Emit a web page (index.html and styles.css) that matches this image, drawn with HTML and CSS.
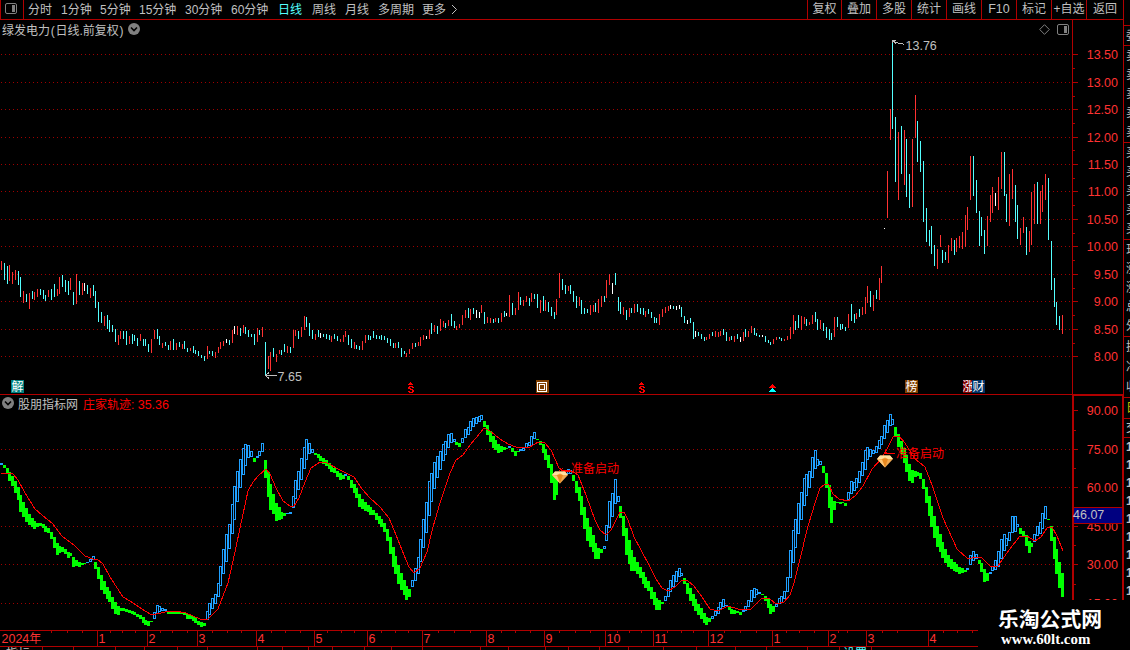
FILE: index.html
```html
<!DOCTYPE html>
<html lang="zh-CN">
<head>
    <meta charset="UTF-8">
    <meta name="viewport" content="width=device-width, initial-scale=1.0">
    <title>绿发电力 日线</title>
    <link rel="stylesheet" href="styles.css">
</head>
<body>

    <div class="screen">
        <div class="main">
            <div class="toolbar">
                <div class="layout-btn">
                    <svg width="12" height="11"><rect x="0.5" y="0.5" width="11" height="10" rx="1.5" fill="none" stroke="#808080"/><rect x="7" y="2" width="3" height="7" fill="#808080"/></svg>
                </div>
                <div class="periods">
                    <span>分时</span>
                    <span>1分钟</span>
                    <span>5分钟</span>
                    <span>15分钟</span>
                    <span>30分钟</span>
                    <span>60分钟</span>
                    <span class="active">日线</span>
                    <span>周线</span>
                    <span>月线</span>
                    <span>多周期</span>
                    <span>更多</span>
                    <svg width="7" height="11"><path d="M1 1L5.5 5.5L1 10" fill="none" stroke="#c0c0c0"/></svg>
                </div>
                <div class="tools">
                    <span>复权</span>
                    <span>叠加</span>
                    <span>多股</span>
                    <span>统计</span>
                    <span>画线</span>
                    <span class="latin">F10</span>
                    <span>标记</span>
                    <span>+自选</span>
                    <span>返回</span>
                </div>
            </div>

            <!-- K line pane -->
            <div class="pane">
                <svg id="price" class="chart" width="1124" height="375" viewBox="0 20 1124 375"></svg>
                <div class="pane-title">
                    <span>绿发电力<span class="paren">(</span>日线.前复权<span class="paren">)</span></span>
                    <svg width="12" height="12"><circle cx="6" cy="6" r="6" fill="#808080"/><path d="M3 4.5L6 7.5L9 4.5" fill="none" stroke="#000" stroke-width="1.6"/></svg>
                </div>
                <div class="pane-icons">
                    <svg width="11" height="11"><path d="M5.5 0.7L10.3 5.5L5.5 10.3L0.7 5.5Z" fill="none" stroke="#808080"/></svg>
                    <svg width="12" height="11"><rect x="0.5" y="0.5" width="11" height="10" rx="1.5" fill="none" stroke="#808080"/><rect x="7" y="2" width="3" height="7" fill="#808080"/></svg>
                </div>
            </div>

            <!-- Indicator pane -->
            <div class="pane">
                <svg id="track" class="chart" width="1124" height="235" viewBox="0 395 1124 235"></svg>
                <div class="pane-title second">
                    <svg width="12" height="12"><circle cx="6" cy="6" r="6" fill="#808080"/><path d="M3 4.5L6 7.5L9 4.5" fill="none" stroke="#000" stroke-width="1.6"/></svg>
                    <span>股朋指标网</span>
                    <span class="value">庄家轨迹: <b>35.36</b></span>
                </div>
            </div>

            <svg id="timeline" class="chart" width="1124" height="20" viewBox="0 630 1124 20"></svg>
        </div>

        <div class="side">
            <div class="group g1"></div>
            <div class="group g2"><span>委</span></div>
            <div class="group g5"><span>卖</span><span>卖</span><span>卖</span><span>卖</span><span>卖</span></div>
            <div class="group g5"><span>买</span><span>买</span><span>买</span><span>买</span><span>买</span></div>
            <div class="group g5"><span>现</span><span>涨</span><span>涨</span><span>总</span><span>外</span></div>
            <div class="group g3"><span>换</span><span>净</span><span>收</span></div>
            <div class="group g4 yellow"><span>日</span></div>
            <div class="group g6"><span>交</span></div>
            <div class="group ticks"><span>1</span><span>1</span><span>1</span><span>1</span><span>1</span><span>1</span><span>1</span><span>1</span><span>1</span></div>
        </div>

        <div class="brand">
            <div class="brand-name">乐淘公式网</div>
            <div class="brand-url">www.60lt.com</div>
        </div>
    </div>

    <script src="chart.js"></script>
</body>
</html>
```
FILE: styles.css
```css
body {
    margin: 0;
    background-color: #000000;
    font-family: "Liberation Sans", "Noto Sans CJK SC", sans-serif;
    font-size: 12px;
    color: #c0c0c0;
}
.screen {
    position: relative;
    display: flex;
    width: 1130px;
    height: 650px;
    overflow: hidden;
    background-color: #000000;
}
.main {
    width: 1124px;
    flex: none;
    display: flex;
    flex-direction: column;
}
.toolbar {
    display: flex;
    height: 19px;
    border-bottom: 1px solid #b00000;
    line-height: 18px;
    white-space: nowrap;
}
.layout-btn {
    box-sizing: border-box;
    width: 24px;
    padding: 3px 0 0 4px;
    border-left: 1px solid #b00000;
    border-right: 1px solid #b00000;
    line-height: 0;
}
.periods {
    display: grid;
    grid-template-columns: 33px 39px 39px 46px 46px 47px 34px 33px 33px 44px 29px 10px;
    padding-left: 4px;
    align-items: center;
}
.periods .active {
    color: #54ffff;
}
.tools {
    display: grid;
    grid-template-columns: 34px repeat(8, 35px) 3px;
    margin-left: auto;
    text-align: center;
}
.tools span {
    border-left: 1px solid #b00000;
}
.tools span:last-child {
    border-right: 1px solid #b00000;
    margin-right: -3px;
}
.tools .latin {
    font-size: 12.5px;
}
.pane {
    position: relative;
}
.chart {
    display: block;
}
.chart text {
    font-size: 12.5px;
}
.chart .cjk {
    font-size: 12px;
}
/* Titles are laid over the charts */
.pane-title {
    position: absolute;
    left: 2px;
    top: 0;
    display: flex;
    align-items: center;
    gap: 4px;
    height: 18px;
    white-space: nowrap;
}
.pane-title.second {
    gap: 4px;
    height: 16px;
}
.pane-title .paren {
    display: inline-block;
    width: 5.5px;
    text-align: center;
}
.pane-title .value {
    margin-left: 1px;
    color: #ff0000;
}
.pane-title .value b {
    font-size: 12.5px;
    font-weight: normal;
}
.pane-icons {
    position: absolute;
    right: 55px;
    top: 4px;
    display: flex;
    gap: 7px;
}
.side {
    flex: 1;
    overflow: hidden;
    margin-left: -1px;
    border-left: 1px solid #b00000;
}
.group {
    box-sizing: border-box;
    display: flex;
    flex-direction: column;
    justify-content: space-around;
    padding-left: 2px;
    line-height: 14px;
    border-bottom: 1px solid #b00000;
    overflow: hidden;
}
.g1 { height: 26px; }
.g2 { height: 20px; }
.g3 { height: 61px; }
.g4 { height: 21px; }
.g5 { height: 97px; }
.g6 { height: 19px; }
.ticks {
    height: 162px;
    border-bottom: none;
    font-weight: bold;
}
.yellow {
    color: #c0c000;
}
.brand {
    position: absolute;
    right: 0;
    bottom: 0;
    width: 132px;
    height: 50px;
    padding-left: 20px;
    background-color: #000000;
    color: #ffffff;
}
.brand-name {
    margin-top: 4px;
    font-family: "Noto Sans CJK SC", sans-serif;
    font-size: 20.8px;
    font-weight: bold;
    line-height: 28px;
}
.brand-url {
    padding-left: 3px;
    font-family: "Liberation Serif", serif;
    font-size: 14.9px;
    font-weight: bold;
    line-height: 15px;
}
```
FILE: chart.js
```js
const RED = '#b00000';
const UP = '#ff3232';

// x, colour (r up, c down, w flat), top-bottom
const candles = `
1r261-270 4c263-280 7c266-284 9r265-281 12r272-284 15r270-280 18c271-285 20c277-297 23r291-303 26c294-302
29r293-309 32c291-299 34r292-300 37r289-297 40c289-295 43c290-299 45c295-301 48r290-297 51c289-300 54c284-297
57r289-296 59r277-294 62c275-287 65c280-292 68c281-295 70r278-290 73c292-305 76r274-304 79c281-295 82r283-295
84w283-291 87c285-294 90r288-298 93c285-296 95c291-308 98c302-322 101c312-323 104r316-326 107c315-329 109c320-332
112c325-332 115c329-342 118r335-345 120r331-339 123c331-339 126c331-345 129r336-344 132c334-344 134c335-341 137c338-346
140r334-341 143c339-346 145c339-346 148c344-352 151r339-353 154r330-339 157c329-339 159c336-345 162r343-348 165c342-346
168c345-350 170r341-350 173c339-350 176r343-350 179c342-347 182r344-349 184c341-349 187c348-352 190r348-351 193c346-353
195c350-354 198c351-356 201c355-358 204c356-361 207r346-359 209c351-354 212c351-356 215r352-358 218r347-353 220r342-349
223r341-346 226w339-343 229c340-345 232r330-343 234w326-334 237r326-335 240c328-336 243r325-333 245c327-334 248c330-337
251c334-337 254c334-345 257r328-342 259c330-335 262r327-337 265c342-375 268r356-369 270r352-371 273c348-357 276r354-362
279r350-354 281c350-355 284c344-352 287r346-353 290c347-353 293r330-348 295r330-336 298c331-339 301r327-337 304r316-330
306c317-327 309c323-336 312c330-339 315r334-340 318c330-337 320w333-338 323c334-337 326c334-339 329c335-340 331r336-342
334c334-339 337c336-341 340r339-342 343r335-342 345r331-337 348c335-345 351c339-348 354r342-349 356c345-349 359c346-350
362r341-350 365r335-343 368c335-340 370c336-340 373c331-338 376c335-339 379c336-339 381c335-340 384c336-340 387c338-343
390c339-346 393c343-348 395r343-348 398c342-348 401c348-357 404c351-354 406r353-357 409r349-354 412r343-349 415c343-347
418r342-346 420r337-346 423r335-340 426w336-339 429r330-339 431c323-334 434r325-332 437c326-334 440r319-331 443r321-327
445c323-328 448r320-326 451c314-326 454c321-328 456r326-330 459r324-328 462r315-325 465r310-318 468c308-318 470r309-320
473c308-314 476w310-318 479w312-318 481r305-313 484c312-324 487r317-323 490r318-323 493c319-323 495r318-322 498c318-323
501r313-322 504c311-317 506w313-316 509r295-317 512c303-315 515r308-315 518r292-310 520c297-305 523r300-306 526r296-302
529c298-306 531r293-302 534c294-299 537c294-308 540r300-313 543c296-311 545r300-311 548c302-312 551c307-316 554c312-319
556r299-315 559r273-298 562c279-290 565c285-294 568r286-291 570c285-294 573c291-302 576c296-308 579r297-306 581c300-314
584c308-314 587c309-313 590r305-315 593r305-312 595c303-312 598r299-313 601r296-307 604c296-302 606r280-298 609r274-285
612w283-294 615c273-285 618c297-311 620c302-314 623r307-315 626c310-320 629r308-317 631c308-313 634r304-313 637c304-312
640c308-314 643c308-315 645r311-317 648c309-314 651c312-318 654c317-323 656c318-323 659r314-325 662r309-317 665r307-313
668r306-311 670w305-309 673c306-309 676w306-310 679w305-309 681c307-317 684c316-323 687w320-324 690c318-323 693c322-339
695w331-337 698c332-336 701c334-339 704c337-341 706r337-340 709r334-339 712c332-336 715r331-337 718r332-337 720r331-336
723c329-335 726c332-341 729r337-341 731c336-340 734r336-342 737c334-339 740w337-342 743r332-341 745c329-337 748r331-337
751r326-333 754c328-335 756c333-336 759c335-337 762w335-337 765c336-342 768c340-343 770c342-345 773r339-344 776r337-340
779c337-339 781c338-341 784r339-341 787r336-340 790r327-339 793r315-334 795c321-330 798c315-328 801r316-330 804r317-324
806c319-326 809r322-325 812r315-324 815c312-322 817c319-330 820r320-329 823c323-331 826c327-338 829c329-340 831c333-340
834r317-337 837c317-327 840c324-330 842c324-329 845c327-331 848r314-328 851c304-321 854c314-323 856r313-319 859c309-317
862r307-315 865r297-314 867r286-303 870c291-307 873r295-311 876c290-299 879r278-300 881r266-283 884w228-229 887r171-218
890r109-140 892c43-129 895c117-182 898r132-200 901c126-174 904r130-185 906c139-197 909c174-208 912r139-207 915r95-138
917c121-162 920c141-172 923c161-222 926c208-242 929c230-246 931c226-254 934c245-266 937r249-269 940r235-247 942c250-263
945c252-260 948r245-263 951r238-251 954c240-255 956r238-252 959r236-248 962r232-249 965r215-247 967r207-230 970r156-200
973c156-196 976c180-213 979c211-246 981c217-236 984c230-254 987r216-246 990r195-222 992r187-213 995w193-206 998r177-210
1001r152-189 1004c152-196 1006c194-222 1009r174-226 1012r169-199 1015c185-222 1017c205-239 1020r228-245 1023r217-233 1026c227-255
1029r231-252 1031r192-245 1034r184-224 1037c182-224 1040r191-224 1042r185-212 1045r174-200 1048c178-240 1051c241-290 1054c278-307
1056c302-325 1059c316-330 1062r315-334`;

// x, colour (b rising, g falling), top-bottom
const bars = `
1b463-465 4g465-468 7g468-474 9g472-481 12g476-486 15g481-493 18g487-500 20g495-512 23g502-517 26g508-522
29g514-525 32g518-527 34g521-529 37g523-527 40g523-526 43g524-528 45g526-532 48g528-533 51g532-539 54g537-548
57g543-555 59g546-553 62g547-552 65g549-554 68g552-558 70g553-556 73g557-567 76g560-566 79g562-567 82g563-565
84g563-564 87b562-563 90b559-562 93b556-560 95g562-569 98g567-579 101g575-590 104g581-594 107g587-599 109g591-602
112g597-609 115g602-614 118g606-615 120g608-611 123g608-611 126g609-612 129g610-613 132g611-614 134g612-615 137g614-617
140g615-619 143g617-623 145g620-625 148g621-626 151g621-622 154b612-619 157b605-614 159b606-612 162b608-611 165b609-611
168g611-614 170g611-614 173g612-614 176g612-614 179g612-614 182g612-614 184g612-615 187g614-619 190g615-619 193g616-621
195g618-623 198g621-625 201g622-627 204g623-626 207b611-620 209b603-615 212b598-609 215b594-604 218b583-597 220b566-586
223b549-574 226b534-562 229b524-549 232b504-534 234b486-520 237b471-502 240b459-488 243b448-475 245b444-466 248b445-458
251b451-457 254g458-462 257b456-458 259b451-456 262b443-452 265g460-478 268g472-497 270g484-510 273g494-514 276g503-521
279g507-520 281g512-519 284g513-516 287b513-514 290b512-514 293b496-508 295b480-499 298b471-490 301b458-480 304b447-469
306b439-460 309b443-454 312b449-453 315g453-455 318g454-458 320g456-461 323g458-464 326g460-466 329g463-469 331g466-472
334g468-473 337g471-477 340g473-480 343g475-479 345b474-476 348g476-480 351g480-488 354g484-493 356g488-498 359g494-507
362g499-509 365g502-511 368g505-512 370g507-515 373g510-515 376g513-520 379g516-524 381g519-527 384g523-532 387g529-541
390g537-554 393g547-567 395g556-574 398g565-584 401g573-590 404g580-595 406g586-600 409g589-597 412b580-587 415b568-581
418b557-574 420b539-562 423b519-548 426b502-533 429b481-516 431b473-502 434b462-489 437b456-478 440b451-470 443b444-461
445b441-455 448b434-448 451b433-443 454b439-442 456g442-445 459g443-447 462b438-443 465b429-438 468b427-435 470b421-431
473b418-427 476b417-424 479b416-422 481b415-420 484g421-427 487g425-435 490g431-442 493g436-448 495g440-450 498g444-453
501g446-452 504g447-450 506g448-449 509b446-448 512g448-452 515g451-456 518g451-452 520b449-451 523b448-451 526b443-448
529b442-446 531b436-446 534b432-439 537g439-440 540g441-445 543g444-453 545g449-460 548g455-468 551g464-483 554g474-500
556g480-495 568b469-474 570b470-474 573g475-481 576g481-493 579g487-501 581g496-515 584g507-529 587g518-541 590g527-547
593g535-552 595g543-559 598g548-559 601g549-553 604b546-549 606b525-541 609b501-528 612b493-517 615b479-504 618b496-502
620g506-518 623g516-536 626g528-555 629g540-564 631g550-571 634g557-571 637g562-574 640g567-578 643g572-584 645g577-588
648g581-591 651g587-599 654g592-605 656g598-610 659g600-610 662g602-604 665b596-601 668b588-597 670b580-592 673b575-587
676b571-582 679b568-577 681b573-576 684g578-584 687g583-594 690g588-601 693g594-606 695g599-611 698g604-615 701g608-619
704g613-623 706g617-625 709g618-622 712b616-619 715b611-616 718b607-614 720b602-609 723b599-607 726b605-606 729g607-610
731g609-614 734g610-614 737g611-613 740g612-615 743b610-612 745b606-611 748b600-607 751b590-602 754b588-598 756b589-595
759b592-594 762g594-595 765g596-601 768g599-608 770g604-614 773g606-612 776b604-607 779b598-604 781b596-603 784b591-599
787b577-592 790b550-578 793b530-563 795b519-548 798b503-534 801b492-520 804b478-506 806b474-496 809b471-488 812b457-478
815b450-469 817b459-466 820b461-465 823g466-473 826g473-488 829g485-508 831g497-523 834g501-510 837g502-503 840g502-504
842g502-503 845g503-506 848b492-500 851b481-494 854b482-491 856b478-488 859b471-483 862b462-476 865b450-470 867b447-460
870b449-457 873b450-454 876b446-453 879b440-449 881b436-445 884b425-439 887b420-433 890b414-426 892b419-425 895g427-436
898g434-447 901g441-454 904g448-463 906g455-472 909g464-481 912g470-483 915g471-477 917g472-476 920g473-479 923g479-489
926g487-503 929g496-516 931g506-527 934g516-538 937g526-547 940g534-552 942g542-558 945g549-563 948g555-567 951g559-569
954g562-571 956g564-572 959g567-574 962g568-573 965g570-572 967b568-570 970b555-565 973b551-561 976b554-559 979g560-564
981g563-572 984g569-582 987g573-581 990b572-574 992b566-571 995b560-570 998b551-567 1001b539-559 1004b534-551 1006b538-546
1009b532-541 1012b516-533 1015b516-532 1017b524-527 1020g528-534 1023g531-536 1026g535-546 1029g541-553 1031g543-547 1034b534-542
1037b526-536 1040b522-534 1042b513-529 1045b506-519 1048g519-520 1051g526-541 1054g537-559 1056g549-574 1059g562-588 1062g573-597`;

const average = `1,474 5,473 13,474 18,480 25,493 35,509 42,515 53,524 62,536 75,546 85,556 93,559 97,559 103,564 110,577
123,597 130,601 145,611 152,615 165,612 175,611 186,613 200,619 207,620 218,609 228,583 235,552 240,528 248,491 253,482
258,476 266,469 270,474 276,488 283,501 290,506 294,506 299,498 305,482 311,468 320,462 327,463 340,470 354,477 362,489
370,498 380,507 389,518 396,535 404,555 409,567 414,573 420,568 427,552 433,527 440,503 450,473 456,460 463,455 470,445
476,438 484,428 490,431 500,439 508,444 516,447 530,447 538,442 544,442 551,450 559,468 563,471 572,471 578,475 586,495
595,520 600,530 606,535 611,530 620,512 624,512 628,520 634,537 641,550 650,567 656,579 662,588 668,591 675,587 682,580
688,581 694,586 702,597 710,609 718,611 728,606 738,609 750,610 762,598 770,599 776,604 784,602 790,595 794,583 800,559
808,526 816,500 820,488 825,484 829,485 833,494 839,499 848,501 855,496 863,486 872,469 882,458 888,447 893,437 899,436
905,443 914,458 925,467 932,485 943,518 957,549 968,559 976,557 982,558 990,566 998,566 1009,550 1020,536 1027,536 1035,541
1041,537 1047,528 1052,527 1057,536 1063,551`;

function rect(x, y, w, h, fill) {
    return `<rect x="${x}" y="${y}" width="${w}" height="${h}" fill="${fill}"/>`;
}

function label(x, y, text, fill, extra = '') {
    return `<text x="${x}" y="${y}" fill="${fill}" ${extra}>${text}</text>`;
}

function dots(y) {
    return `<line x1="1" x2="1072" y1="${y + 0.5}" y2="${y + 0.5}" stroke="#a00000" stroke-dasharray="1 3"/>`;
}

function parse(data) {
    return [...data.matchAll(/(\d+)([a-z])(\d+)-(\d+)/g)].map(m => [+m[1], m[2], +m[3], +m[4]]);
}

// Small boxed event mark at the foot of the K line pane
function badge(x, w, text, fill) {
    return rect(x, 380, w, 13, fill) + label(x + w / 2, 391, text, '#ffffff', 'class="cjk" text-anchor="middle"');
}

// Arrow head over an S shape
function dollar(x) {
    return rect(x + 2, 382, 1, 1, '#ff0000') + rect(x + 1, 383, 3, 1, '#ff0000') + rect(x, 384, 5, 1, '#ff0000') +
        rect(x + 1, 386, 4, 1, '#ff0000') + rect(x, 387, 2, 1, '#ff0000') + rect(x + 4, 387, 2, 1, '#ff0000') +
        rect(x, 388, 3, 1, '#ff0000') + rect(x + 2, 389, 3, 1, '#ff0000') + rect(x + 4, 390, 2, 1, '#ff0000') +
        rect(x, 391, 2, 1, '#ff0000') + rect(x + 4, 391, 2, 1, '#ff0000') + rect(x + 1, 392, 4, 1, '#ff0000');
}

function gem(x, y) {
    return `<g transform="translate(${x} ${y})" shape-rendering="auto">
        <path d="M3 0.5H13L16 4L8 12.5L0 4Z" fill="#f0a850"/>
        <path d="M3 0.5H13L16 4H0Z" fill="#ffe0a0"/>
        <path d="M5 4H11L8 12.5Z" fill="#e88820"/>
        <path d="M5 4L8 2.5L11 4Z" fill="#f09838"/>
        <path d="M0 4L5 5L8 12.5Z" fill="#ffc878"/>
    </g>`;
}

function drawPrice() {
    const grid = [54, 82, 109, 137, 164, 191, 219, 246, 274, 301, 329, 356];
    const minor = [68, 96, 123, 150, 178, 205, 233, 260, 288, 315, 343];
    const colors = { r: UP, c: '#54ffff', w: '#ffffff' };
    let out = '';
    grid.forEach((y, i) => {
        out += dots(y) + rect(1073, y, 5, 1, RED);
        out += label(1118, y + 5, (13.5 - i * 0.5).toFixed(2), UP, 'text-anchor="end"');
    });
    minor.forEach(y => out += rect(1073, y, 2, 1, RED));
    parse(candles).forEach(([x, c, top, bottom]) => out += rect(x, top, 1, bottom - top, colors[c]));
    out += rect(1072, 20, 1, 375, RED) + rect(1123, 20, 1, 375, RED) + rect(0, 394, 1124, 1, RED);

    // highest and lowest price marks
    out += '<path d="M892.5 43V40.5H896M893 41L896 43.5M894 41.5L898 43H901L904 44.5" fill="none" stroke="#c0c0c0"/>';
    out += label(905.5, 50, '13.76', '#c0c0c0');
    out += '<path d="M265 375.5H277M269 372.5L265.5 375.5L269 378.5" fill="none" stroke="#c0c0c0"/>';
    out += label(277.5, 381, '7.65', '#c0c0c0');

    out += badge(11, 13, '解', '#008080');
    out += rect(536, 380, 13, 13, '#804000');
    out += '<rect x="537.5" y="382.5" width="9" height="9" fill="none" stroke="#fff"/><rect x="539.5" y="384.5" width="5" height="5" fill="none" stroke="#fff"/>';
    out += badge(905, 13, '榜', '#804000') + badge(963, 11, '涨', '#800000') + badge(972, 13, '财', '#003366');
    out += dollar(408) + dollar(639);
    out += '<path d="M772.5 384L776 388H769Z" fill="#ff0000"/><path d="M772.5 388L776 392H769Z" fill="#00ffff"/>';
    document.getElementById('price').innerHTML = out;
}

function drawTrack() {
    let out = '';
    [449, 487, 526, 564, 603].forEach(y => out += dots(y));
    [410, 449, 487, 526, 564, 603].forEach((y, i) => {
        out += rect(1074, y, 4, 1, RED) + label(1118, y + 5, (90 - i * 15).toFixed(2), UP, 'text-anchor="end"');
    });
    [430, 468, 507, 545, 584].forEach(y => out += rect(1074, y, 2, 1, RED));
    parse(bars).forEach(([x, c, top, bottom]) => {
        const h = bottom - top;
        if (c === 'g') {
            out += rect(x - 1, top, 3, h, '#00ff00');
        } else if (h < 3) {
            out += rect(x - 1, top, 3, h, '#20a0ff');
        } else {
            out += `<rect x="${x - 0.5}" y="${top + 0.5}" width="2" height="${h - 1}" fill="none" stroke="#20a0ff"/>`;
        }
    });
    out += `<polyline points="${average}" fill="none" stroke="#ff0000"/>`;
    out += '<path d="M559 470.5L563 468.5M562 470.5H571M884 453.5H895M887 452L884 454" fill="none" stroke="#ff0000"/>';
    out += label(571, 473, '准备启动', '#ff0000', 'class="cjk"') + label(896, 458, '准备启动', '#ff0000', 'class="cjk"');
    out += gem(552, 471) + gem(877, 455);

    out += rect(1072, 395, 2, 235, RED) + rect(1122, 395, 2, 235, RED) + rect(1072, 395, 52, 1, RED);
    out += rect(1074, 507, 48, 17, '#000080') + rect(1074, 507, 48, 1, RED) + rect(1074, 523, 48, 1, RED);
    out += label(1073, 519, '46.07', '#c0c0c0');
    document.getElementById('track').innerHTML = out;
}

function drawTimeline() {
    const months = [[97, 1], [147, 2], [197, 3], [256, 4], [314, 5], [367, 6], [422, 7], [486, 8], [544, 9],
        [605, 10], [653, 11], [708, 12], [772, 1], [828, 2], [866, 3], [928, 4]];
    const weeks = [51, 67, 82, 110, 122, 135, 160, 172, 187, 212, 227, 241, 271, 285, 300, 327, 341, 354, 381, 395, 408,
        438, 454, 470, 501, 515, 530, 559, 575, 590, 617, 629, 641, 667, 681, 693, 724, 740, 756, 786, 799, 814,
        838, 847, 882, 897, 943, 957, 972];
    const lower = [42, 73, 115, 144, 177, 207, 257, 282, 308, 332, 364, 391, 422, 480, 508, 545, 568, 599, 628, 663,
        696, 735, 766, 807, 839, 871];
    let out = rect(0, 630, 1124, 1, RED) + rect(0, 646, 1124, 1, RED);
    months.forEach(([x, name]) => out += rect(x, 630, 1, 17, RED) + label(x + 1.5, 643, name, UP));
    weeks.forEach(x => out += rect(x, 631, 1, 2, RED));
    lower.forEach(x => out += rect(x, 647, 1, 3, RED));
    out += label(1.5, 643, '2024<tspan class="cjk">年</tspan>', UP);

    // tops of the next row
    out += label(6, 658, '指标', '#c0c0c0', 'class="cjk"') + label(843, 658, '设置', '#54ffff', 'class="cjk"');
    document.getElementById('timeline').innerHTML = out;
}

document.querySelectorAll('.chart').forEach(svg => svg.setAttribute('shape-rendering', 'crispEdges'));
drawPrice();
drawTrack();
drawTimeline();
```
